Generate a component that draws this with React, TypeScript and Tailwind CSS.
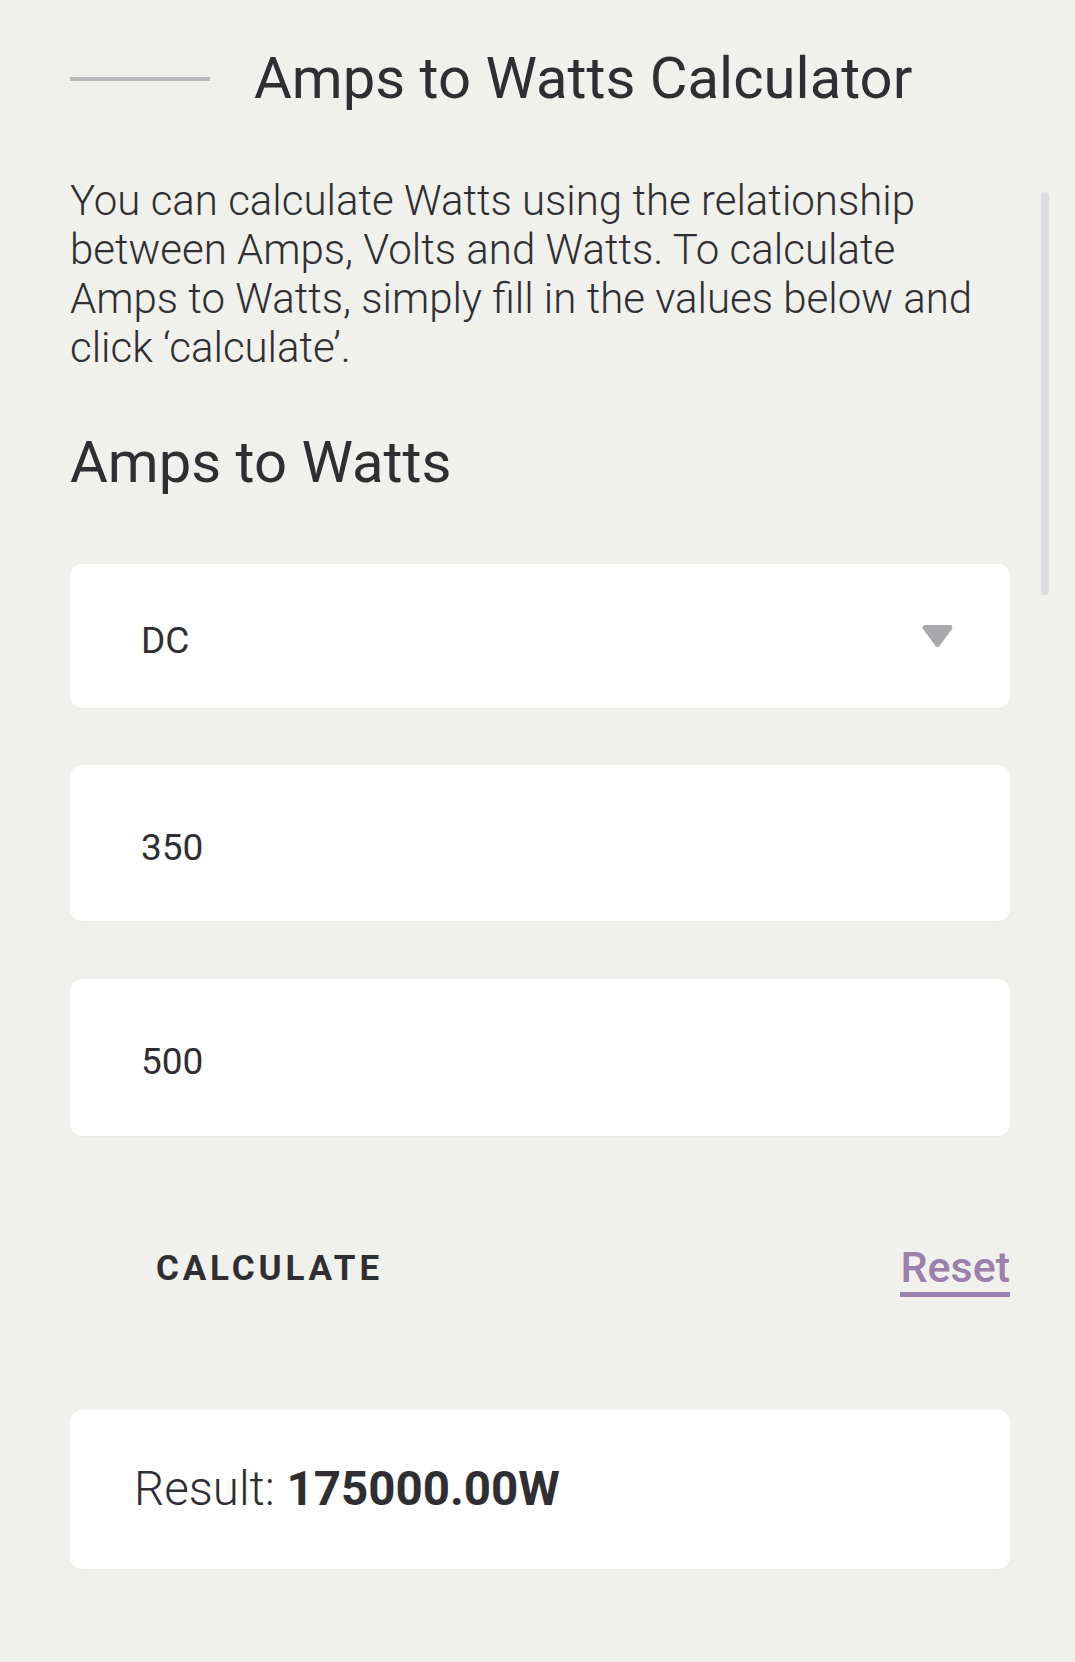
import React from "react";

export default function App() {
  return (
    <div className="relative min-h-[1662px] bg-[#f0f0ec] font-['Roboto',sans-serif] text-[#2f2f33]">
      <div className="absolute left-[1041px] top-[192px] h-[403px] w-[8px] rounded-full bg-[#dcdce0]" />
      <div className="pl-[70px] pr-[65px] pt-[45px]">
        <div className="flex items-center gap-[44px]">
          <div className="h-[4px] w-[140px] bg-[#b9b9bc]" />
          <h1 className="text-[58px] font-normal leading-[67px]">Amps to Watts Calculator</h1>
        </div>
        <p className="mt-[64px] w-[915px] text-[42px] font-light leading-[49px]">
          You can calculate Watts using the relationship between Amps, Volts and Watts. To calculate Amps to Watts, simply fill in the values below and click ‘calculate’.
        </p>
        <h2 className="mt-[57px] text-[58px] font-normal leading-[67px]">Amps to Watts</h2>
        <div className="mt-[68px] flex h-[144px] items-center justify-between rounded-[12px] bg-white pl-[71px] pr-[56px] shadow-[0_1px_2px_rgba(0,0,0,0.04)]">
          <span className="mt-[8px] text-[37px] leading-none">DC</span>
          <svg width="33" height="24" viewBox="0 0 33 24">
            <polygon points="4,3.5 29,3.5 16.5,20.5" fill="#a9a9ad" stroke="#a9a9ad" strokeWidth="5" strokeLinejoin="round" />
          </svg>
        </div>
        <div className="mt-[57px] flex h-[156px] items-center rounded-[12px] bg-white pl-[71px] shadow-[0_1px_2px_rgba(0,0,0,0.04)]">
          <span className="mt-[8px] text-[37px] leading-none">350</span>
        </div>
        <div className="mt-[58px] flex h-[157px] items-center rounded-[12px] bg-white pl-[71px] shadow-[0_1px_2px_rgba(0,0,0,0.04)]">
          <span className="mt-[8px] text-[37px] leading-none">500</span>
        </div>
        <div className="mt-[111px] flex items-start justify-between">
          <span className="ml-[86px] mt-[2px] text-[35px] font-bold leading-[40px] tracking-[0.11em]">CALCULATE</span>
          <span className="inline-block border-b-[5px] border-[#9b80ad] pb-[5px] text-[43px] font-medium leading-[40px] text-[#9b80ad]">
            Reset
          </span>
        </div>
        <div className="mt-[113px] flex h-[159px] items-center rounded-[12px] bg-white pl-[64px] shadow-[0_1px_2px_rgba(0,0,0,0.04)]">
          <span className="text-[47.5px] leading-none">
            <span className="font-light">Result: </span>
            <span className="font-bold">175000.00W</span>
          </span>
        </div>
      </div>
    </div>
  );
}
